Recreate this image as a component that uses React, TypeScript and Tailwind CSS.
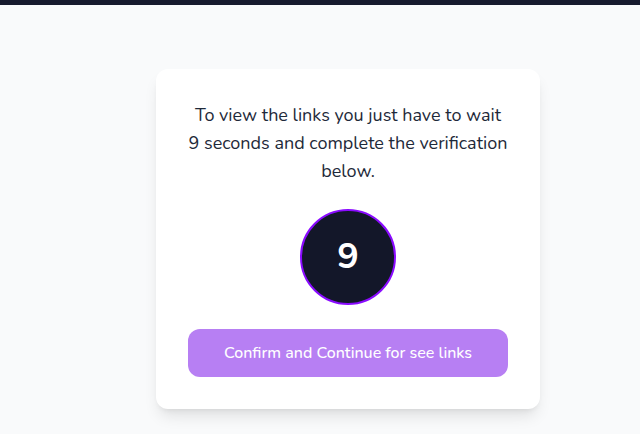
import React from "react";

const App: React.FC = () => {
  const seconds = 9;

  return (
    <div
      className="min-h-screen w-full bg-gray-50"
      style={{ fontFamily: '"Nunito", "Lato", "Noto Sans", sans-serif' }}
    >
      <div className="h-[5px] w-full bg-[#171a2e]" />
      <div className="flex justify-center pl-14 pt-16">
        <div className="w-96 rounded-xl bg-white p-8 shadow-lg">
          <p className="text-center text-lg leading-7 text-gray-800">
            To view the links you just have to wait {seconds} seconds and complete the verification below.
          </p>
          <div className="mt-6 flex justify-center">
            <div className="flex h-24 w-24 items-center justify-center rounded-full border-2 border-[#8a0bff] bg-[#131729]">
              <span className="text-4xl font-bold text-white">{seconds}</span>
            </div>
          </div>
          <button
            type="button"
            className="mt-6 h-12 w-full rounded-xl bg-[#b77ff3] text-base font-medium text-white"
          >
            Confirm and Continue for see links
          </button>
        </div>
      </div>
    </div>
  );
};

export default App;
